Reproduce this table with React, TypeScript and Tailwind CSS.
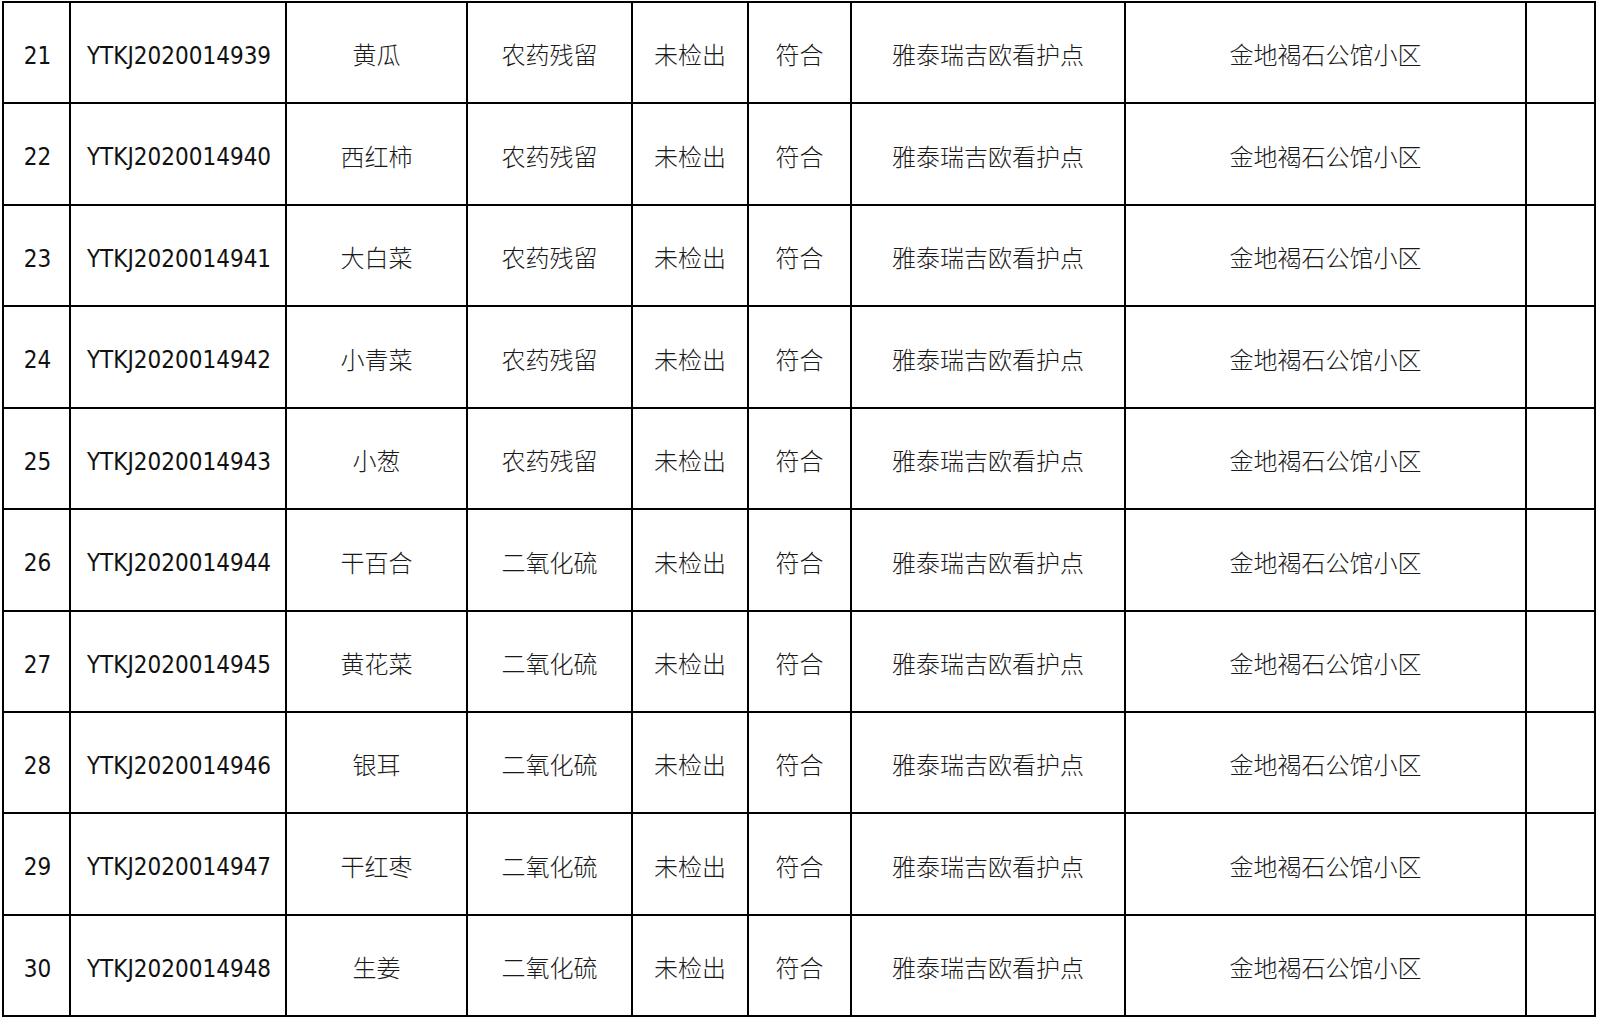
import React from "react";

const rows = [
  ["21", "YTKJ2020014939", "黄瓜", "农药残留"],
  ["22", "YTKJ2020014940", "西红柿", "农药残留"],
  ["23", "YTKJ2020014941", "大白菜", "农药残留"],
  ["24", "YTKJ2020014942", "小青菜", "农药残留"],
  ["25", "YTKJ2020014943", "小葱", "农药残留"],
  ["26", "YTKJ2020014944", "干百合", "二氧化硫"],
  ["27", "YTKJ2020014945", "黄花菜", "二氧化硫"],
  ["28", "YTKJ2020014946", "银耳", "二氧化硫"],
  ["29", "YTKJ2020014947", "干红枣", "二氧化硫"],
  ["30", "YTKJ2020014948", "生姜", "二氧化硫"],
];

const latin = "[font-family:'DejaVu_Sans_Condensed','DejaVu_Sans',sans-serif] text-[24px] text-[#111] pt-[6px]";
const cjk = "[font-family:'Noto_Sans_CJK_SC',sans-serif] font-light text-[24px] text-[#1a1a1a] pt-[3px]";
const cell = "border-r-2 border-b-2 border-black flex items-center justify-center whitespace-nowrap";

export default function App() {
  return (
    <div className="w-[1600px] h-[1020px] bg-white overflow-hidden">
      <div className="ml-[2px] mt-[1px] w-fit border-l-2 border-t-2 border-black grid grid-cols-[67px_216px_181px_165px_116px_103px_274px_401px_69px] grid-rows-[101px_102px_101px_102px_101px_102px_101px_101px_102px_101px]">
        {rows.map((r) => (
          <React.Fragment key={r[0]}>
            <div className={`${cell} ${latin} pl-[2px]`}>{r[0]}</div>
            <div className={`${cell} ${latin} pl-[2px]`}>{r[1]}</div>
            <div className={`${cell} ${cjk}`}>{r[2]}</div>
            <div className={`${cell} ${cjk}`}>{r[3]}</div>
            <div className={`${cell} ${cjk}`}>未检出</div>
            <div className={`${cell} ${cjk}`}>符合</div>
            <div className={`${cell} ${cjk}`}>雅泰瑞吉欧看护点</div>
            <div className={`${cell} ${cjk}`}>金地褐石公馆小区</div>
            <div className={cell}></div>
          </React.Fragment>
        ))}
      </div>
    </div>
  );
}
